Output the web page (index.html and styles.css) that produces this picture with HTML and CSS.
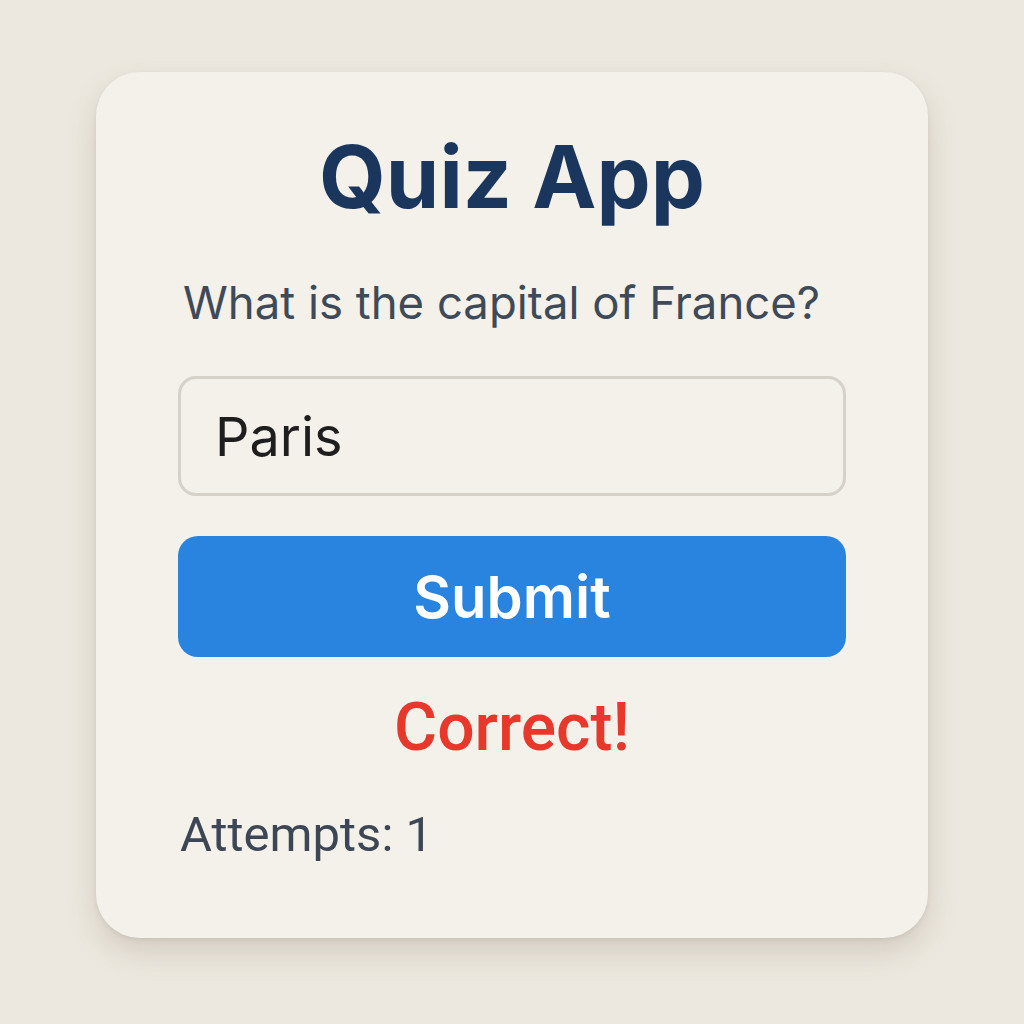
FILE: index.html
```html
<!DOCTYPE html>
<html lang="en">
<head>
<meta charset="utf-8">
<title>Quiz App</title>
<link rel="stylesheet" href="styles.css">
</head>
<body>
<main class="card">
  <h1 class="title">Quiz App</h1>
  <p class="question">What is the capital of France?</p>
  <div class="answer">Paris</div>
  <button class="submit" type="button">Submit</button>
  <p class="result">Correct!</p>
  <p class="attempts">Attempts: 1</p>
</main>
</body>
</html>
```
FILE: styles.css
```css
html, body {
  margin: 0;
  padding: 0;
}
body {
  background: #ede8df;
  font-family: Inter, "Noto Sans", sans-serif;
  height: 1024px;
  overflow: hidden;
}
.card {
  box-sizing: border-box;
  width: 832px;
  height: 866px;
  margin: 72px auto 0;
  padding: 55px 82px 0;
  background: #f4f0ea;
  border-radius: 44px;
  box-shadow: 0 14px 30px rgba(90, 80, 60, 0.18), 0 2px 4px rgba(90, 80, 60, 0.10);
  display: flex;
  flex-direction: column;
}
.title {
  margin: 0;
  font-size: 86px;
  line-height: 100px;
  font-weight: 700;
  color: #1b365d;
  text-align: center;
}
.question {
  margin: 48px 0 0;
  font-size: 45.5px;
  line-height: 56px;
  color: #3f4a58;
  padding-left: 5px;
}
.answer {
  box-sizing: border-box;
  margin-top: 45px;
  height: 120px;
  border: 3px solid #d6d1c9;
  border-radius: 18px;
  padding-left: 34px;
  display: flex;
  align-items: center;
  font-size: 54px;
  color: #1e1e1e;
}
.submit {
  margin-top: 40px;
  height: 121px;
  border: none;
  border-radius: 20px;
  background: #2884df;
  color: #ffffff;
  font-family: Inter, "Noto Sans", sans-serif;
  font-size: 58px;
  font-weight: 600;
  padding: 0;
}
.result {
  margin: 31px 0 0;
  font-family: Roboto, sans-serif;
  font-size: 66px;
  line-height: 80px;
  font-weight: 500;
  color: #e8382c;
  text-align: center;
}
.attempts {
  margin: 37px 0 0;
  font-family: Roboto, sans-serif;
  font-size: 49px;
  line-height: 60px;
  color: #3c4654;
  padding-left: 2px;
}
```
